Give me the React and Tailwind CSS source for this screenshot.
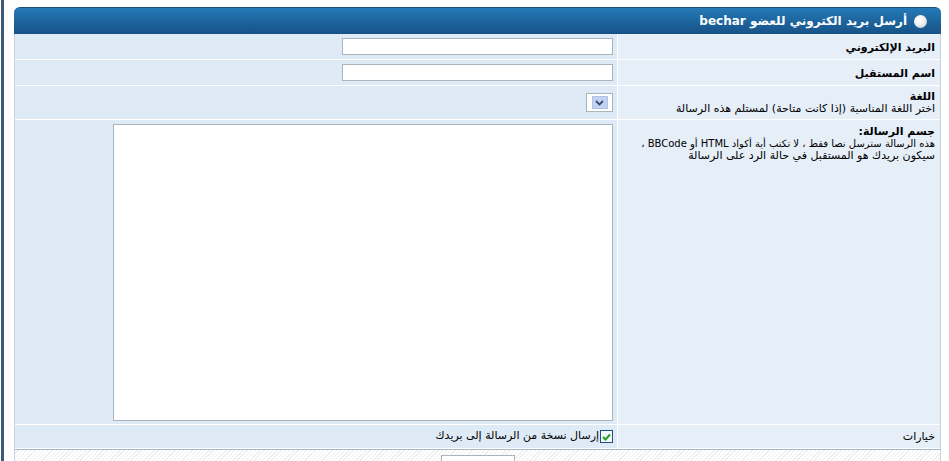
import React from "react";

const font = { fontFamily: '"DejaVu Sans", "Liberation Sans", sans-serif' };

function Row({ label, children, labelClass = "", fieldClass = "", h }) {
  return (
    <div className={`flex border-b border-white ${h}`}>
      <div className={`w-[323px] shrink-0 bg-[#e6eef8] border-l border-white px-[5px] ${labelClass}`}>{label}</div>
      <div className={`flex-1 bg-[#dfeaf7] pr-[4px] ${fieldClass}`}>{children}</div>
    </div>
  );
}

export default function App() {
  return (
    <div className="w-[949px] h-[461px] bg-white relative overflow-hidden text-[11px] text-black" style={font}>
      <div className="absolute left-[1px] top-0 w-[3px] h-full bg-[#3f5a78]" />
      <div dir="rtl" className="ml-[14px] mr-[8px] mt-[7px]">
        <div className="h-[27px] rounded-t-[6px] border-t border-[#1c4e78] bg-gradient-to-b from-[#2479b6] to-[#175287] flex items-center pr-[14px] gap-[7px]">
          <div className="w-[13px] h-[13px] rounded-full bg-[radial-gradient(circle_at_40%_35%,#ffffff_0%,#f2f2f2_45%,#b8c2cc_100%)]" />
          <span className="text-white font-bold text-[12px]">أرسل بريد الكتروني للعضو bechar</span>
        </div>
        <div className="border-r border-l border-[#c5d3e2]">
          <Row h="h-[26px]" labelClass="flex items-center pt-[3px] font-bold" fieldClass="flex items-center" label="البريد الإلكتروني">
            <input className="w-[271px] h-[17px] bg-white border border-[#aab4bd] outline-none" />
          </Row>
          <Row h="h-[26px]" labelClass="flex items-center pt-[3px] font-bold" fieldClass="flex items-center" label="اسم المستقبل">
            <input className="w-[271px] h-[17px] bg-white border border-[#aab4bd] outline-none" />
          </Row>
          <Row
            h="h-[34px]"
            labelClass="pt-[5px] leading-[12px]"
            fieldClass="flex items-center"
            label={
              <>
                <div className="font-bold">اللغة</div>
                <div>اختر اللغة المناسبة (إذا كانت متاحة) لمستلم هذه الرسالة</div>
              </>
            }
          >
            <div className="w-[27px] h-[19px] bg-white border border-[#aab4bd] flex items-center justify-center">
              <div className="w-[16px] h-[13px] bg-[#c2d2f2] border border-[#b0c2e6] flex items-center justify-center">
                <svg width="9" height="6" viewBox="0 0 9 6">
                  <path d="M1 1 L4.5 4.5 L8 1" stroke="#3d4a6a" strokeWidth="1.8" fill="none" />
                </svg>
              </div>
            </div>
          </Row>
          <Row
            h="h-[305px]"
            labelClass="pt-[6px] leading-[12px]"
            fieldClass="pt-[4px]"
            label={
              <>
                <div className="font-bold">جسم الرسالة:</div>
                <div className="text-[10px] whitespace-nowrap">هذه الرسالة سترسل نصا فقط ، لا تكتب أية أكواد HTML أو BBCode ،</div>
                <div>سيكون بريدك هو المستقبل في حالة الرد على الرسالة</div>
              </>
            }
          >
            <div className="w-[500px] h-[297px] bg-white border border-[#aab4bd]" />
          </Row>
          <Row h="h-[24px]" labelClass="flex items-center pt-[2px]" fieldClass="flex items-center gap-[1px]" label="خيارات">
            <div className="w-[13px] h-[13px] border border-[#1c5180] bg-[#f4f8fc] flex items-center justify-center">
              <svg width="9" height="8" viewBox="0 0 9 8">
                <path d="M1 4 L3.5 6.5 L8 1.5" stroke="#21a121" strokeWidth="2" fill="none" />
              </svg>
            </div>
            <span>إرسال نسخة من الرسالة إلى بريدك</span>
          </Row>
        </div>
        <div className="h-[20px] border-t border-[#a9b8c8] border-r border-l border-r-[#c5d3e2] border-l-[#c5d3e2] bg-[repeating-linear-gradient(135deg,#ffffff_0px,#ffffff_2px,#eeeeee_2px,#eeeeee_3px)] flex justify-center pt-[5px]">
          <div className="w-[74px] h-[20px] bg-white border border-[#aab4bd]" />
        </div>
      </div>
    </div>
  );
}
